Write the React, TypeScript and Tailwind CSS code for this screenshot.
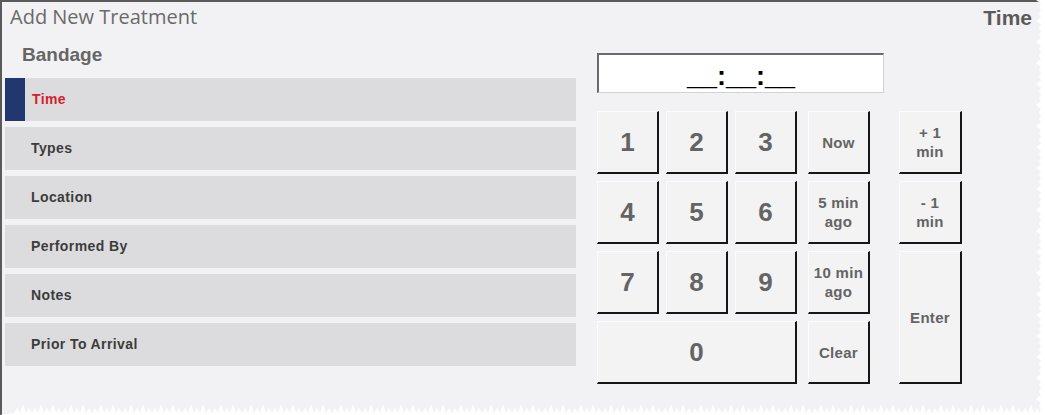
import React from 'react';

const menuItems = ['Time', 'Types', 'Location', 'Performed By', 'Notes', 'Prior To Arrival'];

const btn =
  'flex items-center justify-center bg-[#f3f3f3] border border-t-[#fbfbfb] border-l-[#fbfbfb] border-r-2 border-b-2 border-r-[#161616] border-b-[#161616] text-[#646464] font-bold leading-[19px] text-center';

// torn paper edge, right side and bottom
const TornEdge = () => {
  const right: string[] = ['1045,0'];
  for (let y = 0; y <= 415; y += 7) {
    right.push(`${1036 + ((y / 7) % 3 === 0 ? 0 : 3)},${y}`);
    right.push(`${1041},${y + 3.5}`);
  }
  right.push('1045,415');
  const bottom: string[] = ['0,415'];
  for (let x = 14; x <= 1040; x += 6) {
    const h = (x * 7) % 5 < 2 ? 404 : 408;
    bottom.push(`${x},413`);
    bottom.push(`${x + 3},${h}`);
  }
  bottom.push('1045,413', '1045,415');
  return (
    <svg className="absolute left-0 top-0 pointer-events-none" width={1045} height={415}>
      <polygon points={right.join(' ')} fill="#ffffff" />
      <polygon points={bottom.join(' ')} fill="#ffffff" />
    </svg>
  );
};

export default function App() {
  return (
    <div className="relative w-[1045px] h-[415px] overflow-hidden bg-white font-['Liberation_Sans',Arial,sans-serif]">
      <div className="w-[1045px] h-[415px] bg-[#f2f2f4] border-l-2 border-t-2 border-[#5a5a5a]">
        {/* Header */}
        <div className="flex justify-between items-start h-[40px]">
          <div className="pl-[8px] pt-[2px] text-[20px] leading-[26px] text-[#6a6a6a] font-['Open_Sans',sans-serif]">
            Add New Treatment
          </div>
          <div className="pr-[13px] pt-[4px] text-[21px] leading-[24px] font-bold text-[#5a5a5a]">Time</div>
        </div>

        <div className="flex">
          {/* Left menu */}
          <div className="w-[574px] pl-[3px]">
            <div className="pl-[17px] h-[36px] text-[19px] leading-[24px] font-bold text-[#666666] pt-[1px]">Bandage</div>
            <div className="flex flex-col gap-[6px]">
              {menuItems.map((item, i) => (
                <div key={item} className="flex h-[43px] bg-[#dcdcde]">
                  {i === 0 ? <div className="w-[20px] bg-[#22366f]" /> : <div className="w-[20px]" />}
                  <div
                    className={
                      'flex items-center text-[14px] tracking-[0.4px] font-bold ' +
                      (i === 0 ? 'pl-[7px] text-[#d61c2b]' : 'pl-[6px] text-[#3c3c3c]')
                    }
                  >
                    {item}
                  </div>
                </div>
              ))}
            </div>
          </div>

          {/* Right keypad */}
          <div className="pl-[21px] pt-[11px]">
            <div className="w-[287px] h-[40px] bg-white border-t-2 border-l-2 border-r border-b border-t-[#6a6a6a] border-l-[#6a6a6a] border-r-[#d2d2d2] border-b-[#d2d2d2] flex items-end justify-center pb-[1px] text-[27px] leading-[30px] font-bold text-black">
              __:__:__
            </div>

            <div className="flex mt-[18px]">
              <div className="grid grid-cols-[62px_62px_62px] grid-rows-[63px_63px_63px_63px] gap-[7px] text-[26px]">
                {['1', '2', '3', '4', '5', '6', '7', '8', '9'].map((d) => (
                  <div key={d} className={btn}>
                    {d}
                  </div>
                ))}
                <div className={btn + ' col-span-3'}>0</div>
              </div>

              <div className="ml-[11px] grid grid-cols-[62px] grid-rows-[63px_63px_63px_63px] gap-[7px] text-[15px] tracking-[0.3px]">
                <div className={btn}>Now</div>
                <div className={btn}>
                  5 min
                  <br />
                  ago
                </div>
                <div className={btn}>
                  10 min
                  <br />
                  ago
                </div>
                <div className={btn}>Clear</div>
              </div>

              <div className="ml-[29px] grid grid-cols-[63px] grid-rows-[63px_63px_133px] gap-[7px] text-[15px] tracking-[0.3px]">
                <div className={btn}>
                  + 1
                  <br />
                  min
                </div>
                <div className={btn}>
                  - 1
                  <br />
                  min
                </div>
                <div className={btn}>Enter</div>
              </div>
            </div>
          </div>
        </div>
      </div>
      <TornEdge />
    </div>
  );
}
